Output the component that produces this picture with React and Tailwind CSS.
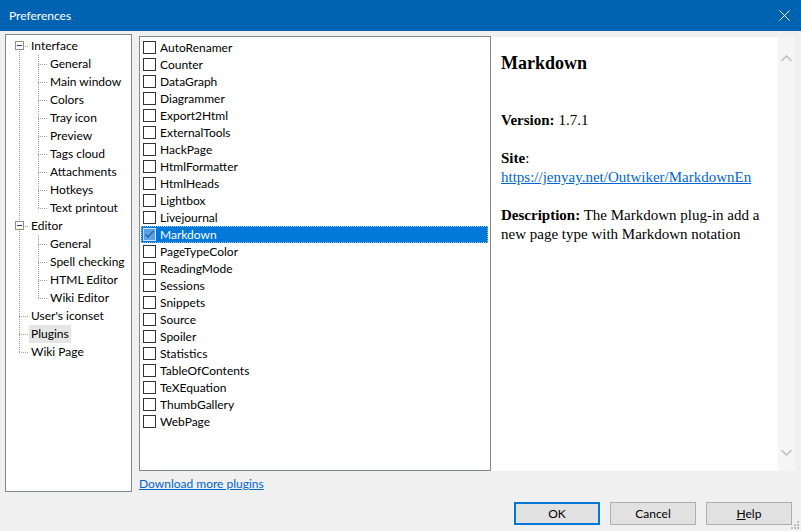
import React from "react";

const UI = { fontFamily: 'Lato, "Noto Sans", "Liberation Sans", Arial, sans-serif' };
const SERIF = { fontFamily: '"Liberation Serif", "Times New Roman", serif' };

const tree = [
  { label: "Interface", level: 0, box: true, first: true },
  { label: "General", level: 1 },
  { label: "Main window", level: 1 },
  { label: "Colors", level: 1 },
  { label: "Tray icon", level: 1 },
  { label: "Preview", level: 1 },
  { label: "Tags cloud", level: 1 },
  { label: "Attachments", level: 1 },
  { label: "Hotkeys", level: 1 },
  { label: "Text printout", level: 1, last: true },
  { label: "Editor", level: 0, box: true },
  { label: "General", level: 1 },
  { label: "Spell checking", level: 1 },
  { label: "HTML Editor", level: 1 },
  { label: "Wiki Editor", level: 1, last: true },
  { label: "User's iconset", level: 0 },
  { label: "Plugins", level: 0, selected: true },
  { label: "Wiki Page", level: 0, last: true },
];

const plugins = [
  "AutoRenamer", "Counter", "DataGraph", "Diagrammer", "Export2Html", "ExternalTools",
  "HackPage", "HtmlFormatter", "HtmlHeads", "Lightbox", "Livejournal", "Markdown",
  "PageTypeColor", "ReadingMode", "Sessions", "Snippets", "Source", "Spoiler",
  "Statistics", "TableOfContents", "TeXEquation", "ThumbGallery", "WebPage",
];

const DOT = { stroke: "#a0a0a0", strokeWidth: 1, strokeDasharray: "1 1", shapeRendering: "crispEdges" };

function Guide({ item }) {
  const w = item.level === 0 ? 23 : 42;
  return (
    <svg width={w} height={18} className="shrink-0 block">
      {item.level === 0 && item.box && (
        <>
          {!item.first && <line x1={13.5} y1={0} x2={13.5} y2={4} {...DOT} />}
          <line x1={13.5} y1={14} x2={13.5} y2={18} {...DOT} />
          <rect x={9.5} y={4.5} width={8} height={8} fill="#fbfbfb" stroke="#8f8f8f" shapeRendering="crispEdges" />
          <line x1={11} y1={8.5} x2={16} y2={8.5} stroke="#1b3a8a" shapeRendering="crispEdges" />
          <line x1={19} y1={9.5} x2={23} y2={9.5} {...DOT} />
        </>
      )}
      {item.level === 0 && !item.box && (
        <>
          <line x1={13.5} y1={0} x2={13.5} y2={item.last ? 10 : 18} {...DOT} />
          <line x1={13} y1={9.5} x2={23} y2={9.5} {...DOT} />
        </>
      )}
      {item.level === 1 && (
        <>
          <line x1={13.5} y1={0} x2={13.5} y2={18} {...DOT} />
          <line x1={32.5} y1={0} x2={32.5} y2={item.last ? 10 : 18} {...DOT} />
          <line x1={32} y1={9.5} x2={42} y2={9.5} {...DOT} />
        </>
      )}
    </svg>
  );
}

function Checkbox({ checked }) {
  if (checked) {
    return (
      <div className="w-[13px] h-[13px] shrink-0 border border-[#cfe2f5] bg-[#5aa2e4] flex items-center justify-center">
        <svg width="11" height="11" viewBox="0 0 11 11">
          <polyline points="1.5,5.5 4,8 9.5,2" fill="none" stroke="#2c5f92" strokeWidth="1.3" />
        </svg>
      </div>
    );
  }
  return <div className="w-[13px] h-[13px] shrink-0 border border-[#333333] bg-white" />;
}

export default function App() {
  return (
    <div className="w-[801px] h-[531px] bg-[#f0f0f0] flex flex-col relative overflow-hidden text-[12px] text-black" style={UI}>
      {/* Title bar */}
      <div className="h-[31px] bg-[#0063b1] flex items-center justify-between pl-[9px] pr-[11px] shrink-0">
        <span className="text-white text-[12px] leading-none">Preferences</span>
        <svg width="11" height="11" viewBox="0 0 11 11">
          <line x1="0.5" y1="0.5" x2="10.5" y2="10.5" stroke="white" strokeWidth="1" />
          <line x1="10.5" y1="0.5" x2="0.5" y2="10.5" stroke="white" strokeWidth="1" />
        </svg>
      </div>

      {/* Main row */}
      <div className="flex items-start pl-[5px] pt-[3px] gap-[7px]">
        {/* Tree */}
        <div className="w-[127px] h-[458px] border border-[#828790] bg-white pt-[2px] shrink-0">
          {tree.map((item, i) => (
            <div key={i} className="flex items-center h-[18px] pl-0">
              <Guide item={item} />
              <span className={"px-[2px] h-[18px] leading-[18px] whitespace-nowrap " + (item.selected ? "bg-[#e5e5e5]" : "")}>
                {item.label}
              </span>
            </div>
          ))}
        </div>

        {/* Right column */}
        <div className="flex flex-col mt-[2px]">
          <div className="flex items-start h-[435px]">
            {/* Plugin list */}
            <div className="w-[352px] h-[435px] border border-[#828790] bg-white pt-[2px] pl-[1px] pr-[2px]">
              {plugins.map((p) => {
                const sel = p === "Markdown";
                return (
                  <div
                    key={p}
                    className={
                      "flex items-center h-[17px] pl-[2px] gap-[4px] " +
                      (sel ? "bg-[#0078d7] text-white outline-1 outline-dotted outline-[#9fc8ee] -outline-offset-1" : "")
                    }
                  >
                    <Checkbox checked={sel} />
                    <span className="leading-[17px]">{p}</span>
                  </div>
                );
              })}
            </div>

            {/* Info panel */}
            <div className="w-[304px] h-[434px] mt-[1px] bg-white flex">
              <div className="flex-1 pl-[10px] text-[15px] leading-[19px] text-black" style={SERIF}>
                <div className="mt-[16px] text-[18px] leading-[21px] font-bold">Markdown</div>
                <div className="mt-[37px]">
                  <b>Version:</b> 1.7.1
                </div>
                <div className="mt-[19px]">
                  <b>Site</b>:
                </div>
                <div>
                  <span className="text-[#0066cc] underline">https://jenyay.net/Outwiker/MarkdownEn</span>
                </div>
                <p className="mt-[19px] pr-[8px]">
                  <b>Description:</b> The Markdown plug-in add a new page type with Markdown notation
                </p>
              </div>
              <div className="w-[17px] h-full bg-[#f5f5f5] flex flex-col items-center justify-between pt-[18px] pb-[15px]">
                <svg width="11" height="7" viewBox="0 0 11 7">
                  <polyline points="0.5,6 5.5,1 10.5,6" fill="none" stroke="#c2c2c2" strokeWidth="1.6" />
                </svg>
                <svg width="11" height="7" viewBox="0 0 11 7">
                  <polyline points="0.5,1 5.5,6 10.5,1" fill="none" stroke="#c2c2c2" strokeWidth="1.6" />
                </svg>
              </div>
            </div>
          </div>
          <div className="mt-[5px] leading-[15px]">
            <span className="text-[#0066cc] underline">Download more plugins</span>
          </div>
        </div>
      </div>

      {/* Buttons */}
      <div className="flex justify-end gap-[10px] pr-[9px] mt-[10px]">
        <button className="w-[86px] h-[23px] border-2 border-[#0078d7] bg-[#e1e1e1] text-[12px] leading-none" style={UI}>
          OK
        </button>
        <button className="w-[86px] h-[23px] border border-[#adadad] bg-[#e1e1e1] text-[12px] leading-none" style={UI}>
          Cancel
        </button>
        <button className="w-[86px] h-[23px] border border-[#adadad] bg-[#e1e1e1] text-[12px] leading-none" style={UI}>
          <span className="underline">H</span>elp
        </button>
      </div>

      {/* Size grip */}
      <svg className="absolute right-[1px] bottom-[1px]" width="9" height="9" viewBox="0 0 9 9">
        {[[6, 0], [3, 3], [6, 3], [0, 6], [3, 6], [6, 6]].map(([x, y], i) => (
          <rect key={i} x={x} y={y} width="2" height="2" fill="#bcbcbc" />
        ))}
      </svg>
    </div>
  );
}
